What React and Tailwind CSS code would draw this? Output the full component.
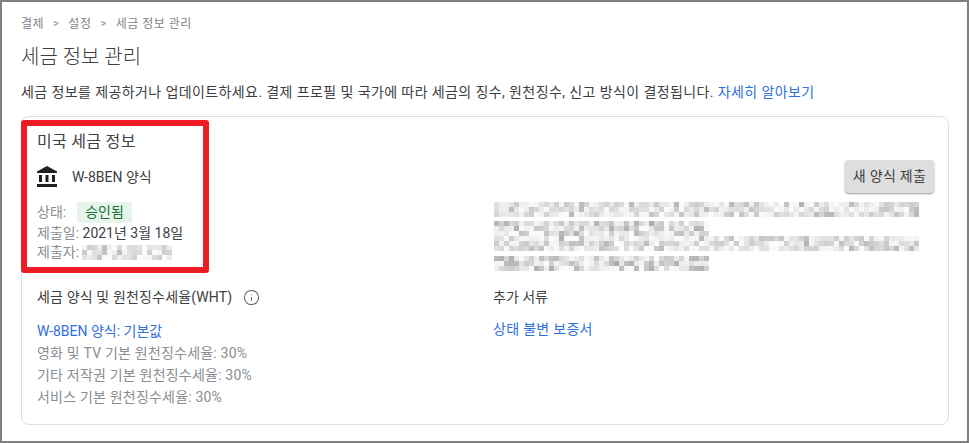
import { Info } from "lucide-react";

const FONT = "font-['Roboto','Noto_Sans_CJK_KR',sans-serif]";

// pseudo random grey cells, stands in for the pixelated text in the screenshot
function Mosaic({ width, height, cell = 5, seed = 1, dark = 160 }) {
  const cells = [];
  let n = seed * 9301;
  for (let y = 0; y < Math.ceil(height / cell); y++) {
    for (let x = 0; x < Math.ceil(width / cell); x++) {
      n = (n * 9301 + 49297) % 233280;
      const r = n / 233280;
      const g = Math.round(dark + (252 - dark) * Math.sqrt(r));
      cells.push(<rect key={`${x}-${y}`} x={x * cell} y={y * cell} width={cell} height={cell} fill={`rgb(${g},${g},${g})`} />);
    }
  }
  return (
    <svg width={width} height={height} className="block">
      {cells}
    </svg>
  );
}

function BankIcon() {
  return (
    <svg width="24" height="24" viewBox="0 0 24 24" fill="#202124" className="block -ml-[2px]">
      <path d="M4 10v7h3v-7H4zm6.5 0v7h3v-7h-3zM2 22h20v-3H2v3zm15-12v7h3v-7h-3zM12 1 2 6.5V8h20V6.5L12 1z" />
    </svg>
  );
}

export default function App() {
  return (
    <div className={`${FONT} relative w-[969px] h-[443px] overflow-hidden border-2 border-[#808080] bg-white pl-[19px] pr-[19px] pt-[14px]`}>
      <div className="flex items-center gap-[9px] text-[12px] tracking-[0.5px] leading-[16px] text-[#80868b]">
        <span>결제</span>
        <span className="text-[11px]">&gt;</span>
        <span>설정</span>
        <span className="text-[11px]">&gt;</span>
        <span>세금 정보 관리</span>
      </div>
      <h1 className="mt-[11px] text-[20px] leading-[28px] font-light text-[#3c4043]">세금 정보 관리</h1>
      <p className="mt-[11px] text-[14px] tracking-[0.4px] leading-[20px] text-[#3c4043] whitespace-nowrap">
        세금 정보를 제공하거나 업데이트하세요. 결제 프로필 및 국가에 따라 세금의 징수, 원천징수, 신고 방식이 결정됩니다.{" "}
        <span className="text-[#2f6fde]">자세히 알아보기</span>
      </p>

      <div className="mt-[14px] w-[928px] h-[309px] rounded-[8px] border border-[#dedede] pl-[15px] pt-[14px] pr-[14px]">
        <div className="text-[16px] tracking-[0.3px] leading-[22px] text-[#3c4043]">미국 세금 정보</div>

        <div className="flex">
          <div className="w-[456px]">
            <div className="mt-[12px] flex items-center">
              <BankIcon />
              <span className="ml-[13px] text-[14px] leading-[20px] text-[#3c4043]">W-8BEN 양식</span>
            </div>
            <div className="mt-[13px] text-[14px] leading-[19px] text-[#8a8d91]">
              <div className="flex items-center h-[21px]">
                <span>상태:</span>
                <span className="ml-[11px] px-[8px] h-[21px] leading-[21px] rounded-[2px] bg-[#e6f4ea] text-[#137333]">승인됨</span>
              </div>
              <div className="h-[19px] mt-[1px]">
                제출일: <span className="text-[#3c4043]">2021년 3월 18일</span>
              </div>
              <div className="flex items-center h-[18px]">
                <span>제출자:</span>
                <span className="ml-[3px]">
                  <Mosaic width={90} height={15} cell={5} seed={3} dark={185} />
                </span>
              </div>
            </div>
          </div>

          <div className="flex-1">
            <div className="flex justify-end mt-[7px]">
              <button className="h-[33px] w-[89px] rounded-[4px] bg-[#dedede] text-[14px] tracking-[0.3px] text-[#3c4043] shadow-[0_1px_2px_rgba(0,0,0,0.4)]">새 양식 제출</button>
            </div>
            <div className="mt-[9px] ml-[1px] flex flex-col">
              <Mosaic width={425} height={15} cell={5} seed={5} dark={175} />
              <div className="mt-[4px]">
                <Mosaic width={215} height={15} cell={5} seed={7} dark={160} />
              </div>
              <Mosaic width={425} height={15} cell={5} seed={11} dark={175} />
              <div className="mt-[5px]">
                <Mosaic width={215} height={15} cell={5} seed={13} dark={160} />
              </div>
            </div>
          </div>
        </div>

        <div className="flex mt-[16px]">
          <div className="w-[456px]">
            <div className="flex items-center text-[14px] tracking-[0.15px] leading-[20px] text-[#3c4043]">
              세금 양식 및 원천징수세율(WHT)
              <Info size={17} strokeWidth={1.5} className="ml-[11px] text-[#5f6368]" />
            </div>
            <div className="mt-[13px] text-[14px] tracking-[0.2px] leading-[22px] text-[#8a8d91]">
              <div className="text-[#2f6fde] tracking-normal">W-8BEN 양식: 기본값</div>
              <div>영화 및 TV 기본 원천징수세율: 30%</div>
              <div>기타 저작권 기본 원천징수세율: 30%</div>
              <div>서비스 기본 원천징수세율: 30%</div>
            </div>
          </div>
          <div className="flex-1">
            <div className="text-[14px] leading-[20px] text-[#3c4043]">추가 서류</div>
            <div className="mt-[11px] text-[14px] tracking-[0.3px] leading-[22px] text-[#2f6fde]">상태 불변 보증서</div>
          </div>
        </div>
      </div>

      {/* red annotation drawn over the card */}
      <div className="absolute left-[19px] top-[118px] w-[188px] h-[153px] rounded-[3px] border-[6px] border-[#ed1c24]" />
    </div>
  );
}
